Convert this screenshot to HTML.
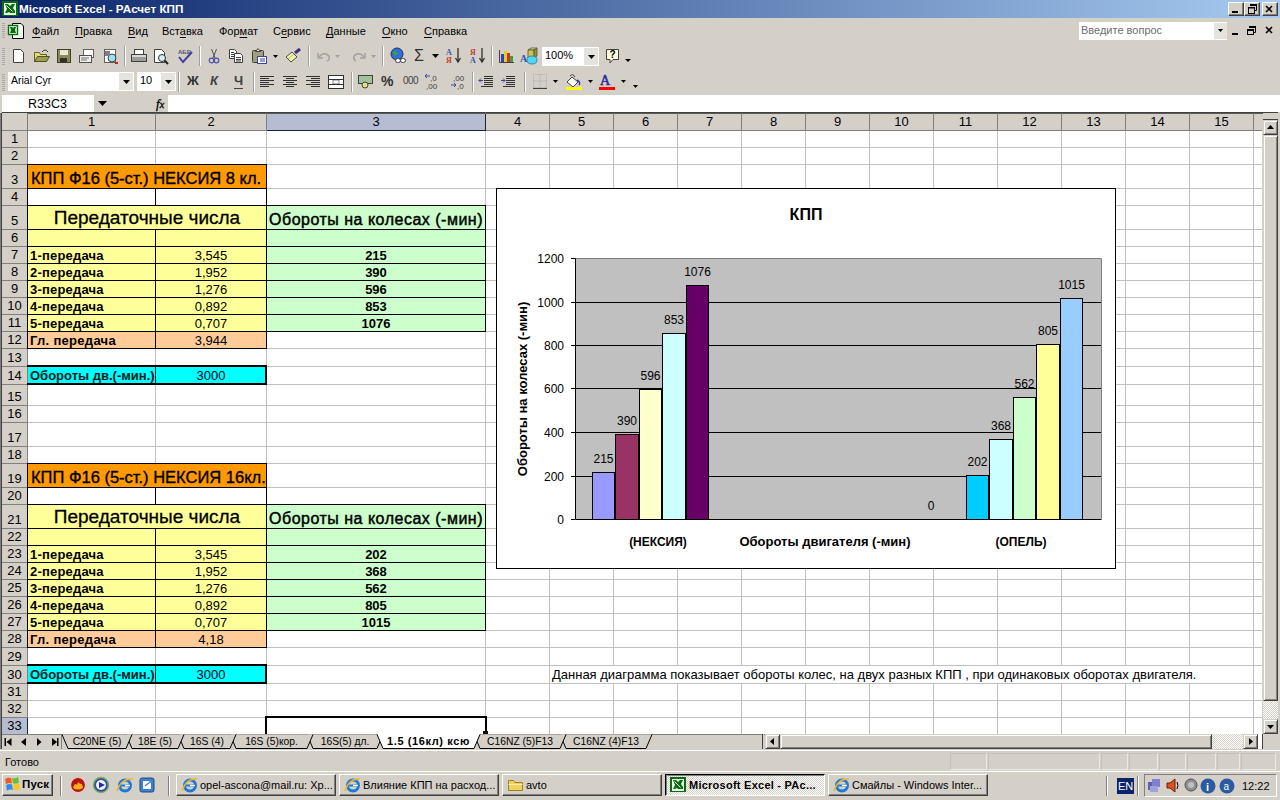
<!DOCTYPE html><html><head><meta charset="utf-8"><title>Excel</title><style>
*{margin:0;padding:0;box-sizing:border-box}
body{width:1280px;height:800px;overflow:hidden;position:relative;background:#D4D0C8;font-family:"Liberation Sans",sans-serif;font-size:11px;color:#000}
.a{position:absolute}
.t{position:absolute;white-space:nowrap;line-height:1}
.ctr{text-align:center}
svg{position:absolute;overflow:visible}
</style></head><body>
<div class="a" style="left:0px;top:0px;width:1280px;height:18px;background:linear-gradient(to right,#0A246A,#A6CAF0)"></div>
<svg style="left:2px;top:1px" width="16" height="16"><rect x="0" y="0" width="16" height="15" fill="#0B6A12"/><rect x="2" y="2" width="12" height="12" fill="#E8FFE8"/><path d="M3 3 H6 L8 5 L10 3 H13 L11 7 L13 10 V12 H8 L7 11 L5 12 H3 L5 8Z" fill="#0B6A12"/><path d="M4.5 4.5 L10.5 10.5" stroke="#E8FFE8" stroke-width="1"/></svg>
<div class="t" style="left:19px;top:3px;font-size:11.7px;font-weight:bold;color:#fff">Microsoft Excel - PAсчет КПП</div>
<div class="a" style="left:1228px;top:2px;width:16px;height:14px;background:#D4D0C8;border-top:1px solid #fff;border-left:1px solid #fff;border-right:1px solid #404040;border-bottom:1px solid #404040;box-shadow:inset -1px -1px 0 #808080"></div>
<div class="a" style="left:1244px;top:2px;width:16px;height:14px;background:#D4D0C8;border-top:1px solid #fff;border-left:1px solid #fff;border-right:1px solid #404040;border-bottom:1px solid #404040;box-shadow:inset -1px -1px 0 #808080"></div>
<div class="a" style="left:1262px;top:2px;width:16px;height:14px;background:#D4D0C8;border-top:1px solid #fff;border-left:1px solid #fff;border-right:1px solid #404040;border-bottom:1px solid #404040;box-shadow:inset -1px -1px 0 #808080"></div>
<svg style="left:1228px;top:2px" width="50" height="14"><rect x="4" y="9" width="6" height="2" fill="#000"/><rect x="20.5" y="5.5" width="6" height="6" fill="none" stroke="#000"/><rect x="20" y="5" width="7" height="1.5" fill="#000"/><path d="M22.5 3.5 H28.5 V8.5 H27" fill="none" stroke="#000"/><rect x="22" y="2" width="7" height="2" fill="#000"/><path d="M38 4 L44 10 M44 4 L38 10" stroke="#000" stroke-width="1.6"/></svg>
<div class="a" style="left:0px;top:18px;width:1280px;height:1px;background:#D4D0C8"></div>
<div class="a" style="left:2px;top:23px;width:3px;height:1px;background:#A8A8A8"></div>
<div class="a" style="left:2px;top:25px;width:3px;height:1px;background:#A8A8A8"></div>
<div class="a" style="left:2px;top:27px;width:3px;height:1px;background:#A8A8A8"></div>
<div class="a" style="left:2px;top:29px;width:3px;height:1px;background:#A8A8A8"></div>
<div class="a" style="left:2px;top:31px;width:3px;height:1px;background:#A8A8A8"></div>
<div class="a" style="left:2px;top:33px;width:3px;height:1px;background:#A8A8A8"></div>
<div class="a" style="left:2px;top:35px;width:3px;height:1px;background:#A8A8A8"></div>
<div class="a" style="left:2px;top:37px;width:3px;height:1px;background:#A8A8A8"></div>
<svg style="left:6px;top:22px" width="20" height="18"><path d="M6.5 1.5 H15 L17.5 4 V16.5 H6.5Z" fill="#F0FFF0" stroke="#000"/><rect x="2.5" y="3.5" width="9" height="9" fill="#E0FFE0" stroke="#0B6A12" stroke-width="1.4"/><path d="M4 5 H6 L7 6 L8 5 H10 L9 8 L10 11 H4 L5 8Z" fill="#0B6A12"/></svg>
<div class="t" style="left:32px;top:26px;font-size:11px;text-decoration-thickness:1px;text-underline-offset:1.5px"><u>Ф</u>айл</div>
<div class="t" style="left:75px;top:26px;font-size:11px;text-decoration-thickness:1px;text-underline-offset:1.5px"><u>П</u>равка</div>
<div class="t" style="left:128px;top:26px;font-size:11px;text-decoration-thickness:1px;text-underline-offset:1.5px"><u>В</u>ид</div>
<div class="t" style="left:162px;top:26px;font-size:11px;text-decoration-thickness:1px;text-underline-offset:1.5px">Вст<u>а</u>вка</div>
<div class="t" style="left:219px;top:26px;font-size:11px;text-decoration-thickness:1px;text-underline-offset:1.5px">Фор<u>м</u>ат</div>
<div class="t" style="left:273px;top:26px;font-size:11px;text-decoration-thickness:1px;text-underline-offset:1.5px">С<u>е</u>рвис</div>
<div class="t" style="left:326px;top:26px;font-size:11px;text-decoration-thickness:1px;text-underline-offset:1.5px"><u>Д</u>анные</div>
<div class="t" style="left:382px;top:26px;font-size:11px;text-decoration-thickness:1px;text-underline-offset:1.5px"><u>О</u>кно</div>
<div class="t" style="left:424px;top:26px;font-size:11px;text-decoration-thickness:1px;text-underline-offset:1.5px"><u>С</u>правка</div>
<div class="a" style="left:1079px;top:22px;width:148px;height:18px;background:#fff"></div>
<div class="a" style="left:1214px;top:23px;width:13px;height:16px;background:#D4D0C8;opacity:0.6"></div>
<svg style="left:1218px;top:29px" width="5" height="3"><path d="M0 0 H5 L2.5 3Z" fill="#000"/></svg>
<div class="t" style="left:1081px;top:25px;font-size:11px;color:#6D6D6D">Введите вопрос</div>
<svg style="left:1228px;top:22px" width="50" height="18"><rect x="4" y="11" width="6" height="2" fill="#000"/><rect x="19.5" y="7.5" width="6" height="5" fill="none" stroke="#000"/><rect x="19" y="7" width="7" height="2" fill="#000"/><path d="M21.5 5.5 H27.5 V10.5 H26" fill="none" stroke="#000"/><rect x="21" y="4" width="7" height="2" fill="#000"/><path d="M38 5 L44 11 M44 5 L38 11" stroke="#000" stroke-width="1.6"/></svg>
<div class="a" style="left:0px;top:43px;width:636px;height:25px;background:#D4D0C8"></div>
<div class="a" style="left:2px;top:48px;width:3px;height:1px;background:#A8A8A8"></div>
<div class="a" style="left:2px;top:50px;width:3px;height:1px;background:#A8A8A8"></div>
<div class="a" style="left:2px;top:52px;width:3px;height:1px;background:#A8A8A8"></div>
<div class="a" style="left:2px;top:54px;width:3px;height:1px;background:#A8A8A8"></div>
<div class="a" style="left:2px;top:56px;width:3px;height:1px;background:#A8A8A8"></div>
<div class="a" style="left:2px;top:58px;width:3px;height:1px;background:#A8A8A8"></div>
<div class="a" style="left:2px;top:60px;width:3px;height:1px;background:#A8A8A8"></div>
<div class="a" style="left:2px;top:62px;width:3px;height:1px;background:#A8A8A8"></div>
<div class="a" style="left:2px;top:64px;width:3px;height:1px;background:#A8A8A8"></div>
<div class="a" style="left:2px;top:74px;width:3px;height:1px;background:#A8A8A8"></div>
<div class="a" style="left:2px;top:76px;width:3px;height:1px;background:#A8A8A8"></div>
<div class="a" style="left:2px;top:78px;width:3px;height:1px;background:#A8A8A8"></div>
<div class="a" style="left:2px;top:80px;width:3px;height:1px;background:#A8A8A8"></div>
<div class="a" style="left:2px;top:82px;width:3px;height:1px;background:#A8A8A8"></div>
<div class="a" style="left:2px;top:84px;width:3px;height:1px;background:#A8A8A8"></div>
<div class="a" style="left:2px;top:86px;width:3px;height:1px;background:#A8A8A8"></div>
<div class="a" style="left:2px;top:88px;width:3px;height:1px;background:#A8A8A8"></div>
<div class="a" style="left:2px;top:90px;width:3px;height:1px;background:#A8A8A8"></div>
<div class="a" style="left:124px;top:46px;width:1px;height:20px;background:#A0A0A0"></div>
<div class="a" style="left:125px;top:46px;width:1px;height:20px;background:#fff"></div>
<div class="a" style="left:199px;top:46px;width:1px;height:20px;background:#A0A0A0"></div>
<div class="a" style="left:200px;top:46px;width:1px;height:20px;background:#fff"></div>
<div class="a" style="left:308px;top:46px;width:1px;height:20px;background:#A0A0A0"></div>
<div class="a" style="left:309px;top:46px;width:1px;height:20px;background:#fff"></div>
<div class="a" style="left:382px;top:46px;width:1px;height:20px;background:#A0A0A0"></div>
<div class="a" style="left:383px;top:46px;width:1px;height:20px;background:#fff"></div>
<div class="a" style="left:491px;top:46px;width:1px;height:20px;background:#A0A0A0"></div>
<div class="a" style="left:492px;top:46px;width:1px;height:20px;background:#fff"></div>
<div class="a" style="left:178px;top:72px;width:1px;height:20px;background:#A0A0A0"></div>
<div class="a" style="left:179px;top:72px;width:1px;height:20px;background:#fff"></div>
<div class="a" style="left:253px;top:72px;width:1px;height:20px;background:#A0A0A0"></div>
<div class="a" style="left:254px;top:72px;width:1px;height:20px;background:#fff"></div>
<div class="a" style="left:351px;top:72px;width:1px;height:20px;background:#A0A0A0"></div>
<div class="a" style="left:352px;top:72px;width:1px;height:20px;background:#fff"></div>
<div class="a" style="left:472px;top:72px;width:1px;height:20px;background:#A0A0A0"></div>
<div class="a" style="left:473px;top:72px;width:1px;height:20px;background:#fff"></div>
<div class="a" style="left:524px;top:72px;width:1px;height:20px;background:#A0A0A0"></div>
<div class="a" style="left:525px;top:72px;width:1px;height:20px;background:#fff"></div>
<svg style="left:11px;top:48px" width="16" height="16"><path d="M2.5 1.5 H9.5 L12.5 4.5 V14.5 H2.5 Z" fill="#fff" stroke="#404040"/></svg>
<svg style="left:33px;top:48px" width="18" height="16"><path d="M1.5 4.5 H6.5 L7.5 6.5 H13.5 V13.5 H1.5Z" fill="#E8D878" stroke="#606030"/><path d="M1.5 13.5 L4.5 8.5 H16.5 L13.5 13.5Z" fill="#9CA050" stroke="#505020"/><path d="M9 4 Q12 0 15 4" fill="none" stroke="#303030"/></svg>
<svg style="left:56px;top:48px" width="16" height="16"><rect x="1.5" y="1.5" width="13" height="13" fill="#8A8A5A" stroke="#404020"/><rect x="4" y="2" width="8" height="5" fill="#E8E8D8"/><rect x="4" y="10" width="7" height="4" fill="#303030"/></svg>
<svg style="left:78px;top:48px" width="18" height="16"><rect x="5.5" y="1.5" width="10" height="8" fill="#fff" stroke="#606060"/><rect x="1.5" y="7.5" width="12" height="7" fill="#F0F0F0" stroke="#505050"/><path d="M3 10H11M3 12H9" stroke="#707070"/></svg>
<svg style="left:102px;top:48px" width="18" height="17"><rect x="2.5" y="1.5" width="11" height="13" fill="#fff" stroke="#606060"/><circle cx="10" cy="10" r="4" fill="#9FE0F0" stroke="#404040"/><rect x="13" y="14" width="3" height="2" fill="#D02020"/><rect x="3" y="3" width="5" height="5" fill="#808080"/></svg>
<svg style="left:130px;top:48px" width="18" height="16"><rect x="4.5" y="1.5" width="9" height="6" fill="#fff" stroke="#404040"/><rect x="1.5" y="6.5" width="15" height="7" fill="#D8D8D8" stroke="#404040"/><path d="M2 10H16M2 12H16" stroke="#606060"/></svg>
<svg style="left:153px;top:48px" width="18" height="17"><path d="M1.5 1.5 H8.5 L11.5 4.5 V14.5 H1.5Z" fill="#fff" stroke="#404040"/><circle cx="9" cy="10" r="3.5" fill="#D0F0F8" stroke="#303030"/><path d="M11.5 12.5 L15 16" stroke="#202020" stroke-width="2"/></svg>
<svg style="left:176px;top:48px" width="18" height="16"><text x="2" y="6" font-size="6" font-family="Liberation Sans" font-weight="bold" fill="#505070">АБВ</text><path d="M3 9 L7 14 L16 4" fill="none" stroke="#4040A0" stroke-width="2"/></svg>
<svg style="left:207px;top:48px" width="14" height="16"><path d="M4.5 1 L8 10 M9.5 1 L6 10" stroke="#505050" stroke-width="1"/><circle cx="4.5" cy="12.5" r="2.3" fill="none" stroke="#5050B0" stroke-width="1.2"/><circle cx="9.5" cy="12.5" r="2.3" fill="none" stroke="#5050B0" stroke-width="1.2"/></svg>
<svg style="left:228px;top:48px" width="17" height="16"><path d="M1.5 1.5 H6.5 L8.5 3.5 V10.5 H1.5Z" fill="#fff" stroke="#404040"/><path d="M3 4.5H6M3 6.5H7M3 8.5H7" stroke="#404040"/><path d="M6.5 5.5 H12.5 L14.5 7.5 V14.5 H6.5Z" fill="#fff" stroke="#404040"/><path d="M8 9.5H13M8 11.5H13M8 13H13" stroke="#404040"/></svg>
<svg style="left:251px;top:48px" width="28" height="17"><rect x="1.5" y="2.5" width="11" height="12" rx="1" fill="#A0A080" stroke="#404030"/><path d="M4.5 3.5 L7 0.5 L9.5 3.5Z" fill="#E0E0E0" stroke="#404040"/><rect x="6.5" y="8.5" width="9" height="7" fill="#fff" stroke="#4040A0"/><path d="M9 11H14M9 13H14" stroke="#4040A0"/><path d="M22 7 H27 L24.5 10Z" fill="#000"/></svg>
<svg style="left:285px;top:47px" width="18" height="17"><path d="M1 10 L7 5 L12 10 L6 15Z" fill="#F0F0B0" stroke="#505040"/><path d="M3 12 L9 7" stroke="#C0C080"/><path d="M10 6 L15 2" stroke="#403080" stroke-width="3"/></svg>
<svg style="left:315px;top:49px" width="70" height="14"><path d="M3 4 L3 9 L8 9" fill="none" stroke="#A0A0A0" stroke-width="1.5"/><path d="M4 8 Q9 2 14 7 Q15 11 12 12" fill="none" stroke="#A0A0A0" stroke-width="1.5"/><path d="M20 6 H25 L22.5 9Z" fill="#A0A0A0"/><path d="M50 4 L50 9 L45 9" fill="none" stroke="#A0A0A0" stroke-width="1.5"/><path d="M49 8 Q44 2 39 7 Q38 11 41 12" fill="none" stroke="#A0A0A0" stroke-width="1.5"/><path d="M56 6 H61 L58.5 9Z" fill="#A0A0A0"/></svg>
<svg style="left:389px;top:47px" width="18" height="18"><circle cx="8" cy="7" r="6" fill="#3070D0" stroke="#203060"/><path d="M4 5 Q7 3 9 6 Q7 9 5 8Z" fill="#40A040"/><rect x="6.5" y="11.5" width="5" height="4" rx="2" fill="#fff" stroke="#404040"/><rect x="11.5" y="11.5" width="5" height="4" rx="2" fill="#fff" stroke="#404040"/></svg>
<div class="t" style="left:414px;top:48px;font-size:16px;color:#303030">Σ</div>
<svg style="left:432px;top:54px" width="7" height="4"><path d="M0 0 H7 L3.5 4Z" fill="#000"/></svg>
<svg style="left:445px;top:47px" width="18" height="18"><text x="1" y="8" font-size="8" font-weight="bold" font-family="Liberation Serif" fill="#4050B0">А</text><text x="1" y="16" font-size="8" font-weight="bold" font-family="Liberation Serif" fill="#C04030">Я</text><path d="M13 1 V14 M10.5 11 L13 15 L15.5 11" fill="none" stroke="#303030" stroke-width="1.3"/></svg>
<svg style="left:469px;top:47px" width="18" height="18"><text x="1" y="8" font-size="8" font-weight="bold" font-family="Liberation Serif" fill="#C04030">Я</text><text x="1" y="16" font-size="8" font-weight="bold" font-family="Liberation Serif" fill="#4050B0">А</text><path d="M13 1 V14 M10.5 11 L13 15 L15.5 11" fill="none" stroke="#303030" stroke-width="1.3"/></svg>
<svg style="left:498px;top:47px" width="18" height="18"><path d="M1.5 3 V15.5 H16" fill="none" stroke="#404040"/><rect x="3" y="7" width="3" height="8" fill="#3040C0"/><rect x="6" y="4" width="3" height="11" fill="#E0D020"/><rect x="9" y="6" width="3" height="9" fill="#D03030"/><rect x="12" y="9" width="3" height="6" fill="#40A040"/></svg>
<svg style="left:520px;top:47px" width="20" height="19"><path d="M8 3 L11 1 H17 L14 3Z" fill="#E8E890" stroke="#505030" stroke-width="0.8"/><path d="M8 3 H14 V11 H8Z" fill="#C8C850" stroke="#505030" stroke-width="0.8"/><path d="M14 3 L17 1 V9 L14 11Z" fill="#909040" stroke="#505030" stroke-width="0.8"/><path d="M7 13 Q7 9 12 9 Q17 9 17 13 Q17 17 12 17 Q7 17 7 13Z" fill="#50D8F0" stroke="#3070A0" stroke-width="0.8"/><text x="0" y="15" font-size="10" font-weight="bold" font-family="Liberation Serif" fill="#3050B0">A</text></svg>
<div class="a" style="left:542px;top:47px;width:57px;height:19px;background:#fff"></div>
<div class="a" style="left:584px;top:48px;width:14px;height:17px;background:#D4D0C8;opacity:0.6"></div>
<div class="t" style="left:545px;top:50px;font-size:11px">100%</div>
<svg style="left:588px;top:55px" width="7" height="4"><path d="M0 0 H7 L3.5 4Z" fill="#000"/></svg>
<svg style="left:604px;top:47px" width="18" height="18"><path d="M2.5 2.5 H14.5 V12.5 H9 L6 16 V12.5 H2.5Z" fill="#FFFFE0" stroke="#404040"/><text x="5.5" y="11" font-size="10" font-weight="bold" fill="#000">?</text></svg>
<svg style="left:625px;top:59px" width="6" height="3"><path d="M0 0 H6 L3 3Z" fill="#000"/></svg>
<div class="a" style="left:8px;top:72px;width:126px;height:19px;background:#fff"></div>
<div class="a" style="left:119px;top:73px;width:14px;height:17px;background:#D4D0C8;opacity:0.6"></div>
<div class="t" style="left:11px;top:75px;font-size:10.5px">Arial Cyr</div>
<svg style="left:123px;top:80px" width="7" height="4"><path d="M0 0 H7 L3.5 4Z" fill="#000"/></svg>
<div class="a" style="left:137px;top:72px;width:39px;height:19px;background:#fff"></div>
<div class="a" style="left:161px;top:73px;width:14px;height:17px;background:#D4D0C8;opacity:0.6"></div>
<div class="t" style="left:140px;top:75px;font-size:11px">10</div>
<svg style="left:165px;top:80px" width="7" height="4"><path d="M0 0 H7 L3.5 4Z" fill="#000"/></svg>
<div class="t" style="left:187px;top:74px;font-size:13px;font-weight:bold;color:#303030">Ж</div>
<div class="t" style="left:210px;top:74px;font-size:13px;font-weight:bold;font-style:italic;color:#404040">К</div>
<div class="t" style="left:234px;top:74px;font-size:13px;font-weight:bold;color:#404040">Ч</div>
<div class="a" style="left:234px;top:88px;width:9px;height:1px;background:#404040"></div>
<svg style="left:259px;top:74px" width="80" height="16"><path d="M1 2.5H15M1 4.5H10M1 6.5H15M1 8.5H10M1 10.5H15M1 12.5H10" stroke="#303030"/><path d="M24 2.5H38M27 4.5H35M24 6.5H38M27 8.5H35M24 10.5H38M27 12.5H35" stroke="#303030"/><path d="M47 2.5H61M52 4.5H61M47 6.5H61M52 8.5H61M47 10.5H61M52 12.5H61" stroke="#303030"/><rect x="69.5" y="1.5" width="15" height="13" fill="#fff" stroke="#303030"/><path d="M70 5.5H84M70 10.5H84" stroke="#303030"/><rect x="74" y="6" width="6" height="4" fill="#fff" stroke="#303030" stroke-width="0.6"/></svg>
<svg style="left:357px;top:73px" width="20" height="17"><rect x="1.5" y="2.5" width="14" height="8" fill="#A0C0A0" stroke="#404040"/><circle cx="8" cy="12" r="3" fill="#E0E080" stroke="#404040"/></svg>
<div class="t" style="left:381px;top:74px;font-size:14px;font-weight:bold;color:#303030">%</div>
<div class="t" style="left:403px;top:76px;font-size:10px;color:#404040;letter-spacing:-0.5px">000</div>
<svg style="left:425px;top:72px" width="50" height="20"><text x="5" y="9" font-size="8" fill="#404040">,0</text><text x="1" y="17" font-size="8" fill="#404040">,00</text><path d="M1 4 H5 M2 2 L0 4 L2 6" stroke="#4040A0" fill="none"/><text x="28" y="9" font-size="8" fill="#404040">,00</text><text x="32" y="17" font-size="8" fill="#404040">,0</text><path d="M26 13 H31 M29 11 L31 13 L29 15" stroke="#4040A0" fill="none"/></svg>
<svg style="left:478px;top:74px" width="40" height="16"><path d="M6 2.5H15M6 4.5H15M6 6.5H15M6 8.5H15M6 10.5H15M3 12.5H15" stroke="#303030"/><path d="M1 6.5 H5 M3 4.5 L1 6.5 L3 8.5" stroke="#4040A0" fill="none"/><path d="M28 2.5H37M28 4.5H37M28 6.5H37M28 8.5H37M28 10.5H37M25 12.5H37" stroke="#303030"/><path d="M23 6.5 H27 M25 4.5 L27 6.5 L25 8.5" stroke="#4040A0" fill="none"/></svg>
<svg style="left:532px;top:73px" width="110" height="18"><path d="M1.5 1.5 H14.5 V14.5 H1.5Z M8 1.5 V14.5 M1.5 8 H14.5" fill="none" stroke="#A8A8A8" stroke-dasharray="1 1"/><path d="M1 15.5 H15" stroke="#404040"/><path d="M21 7 H26 L23.5 10Z" fill="#000"/><path d="M35 9 L40 4 L46 9 L41 14Z" fill="#fff" stroke="#404040"/><path d="M38 3 Q41 0 43 4" fill="none" stroke="#404040"/><path d="M45 7 Q49 9 47 12" fill="none" stroke="#4040A0" stroke-width="1.5"/><rect x="34" y="14" width="16" height="3" fill="#FFFF00"/><path d="M56 7 H61 L58.5 10Z" fill="#000"/><text x="68" y="12" font-size="14" font-family="Liberation Serif" fill="#2828A0" stroke="#2828A0" stroke-width="0.5">A</text><rect x="67" y="14" width="16" height="3" fill="#FF0000"/><path d="M89 7 H94 L91.5 10Z" fill="#000"/><path d="M101 12 H106 L103.5 15Z" fill="#000"/></svg>
<div class="a" style="left:2px;top:95px;width:92px;height:17px;background:#fff"></div>
<div class="t" style="left:28px;top:98px;font-size:12.5px">R33C3</div>
<svg style="left:98px;top:101px" width="9" height="5"><path d="M0 0 H9 L4.5 5Z" fill="#000"/></svg>
<div class="t" style="left:156px;top:97px;font-size:13px;font-family:&quot;Liberation Serif&quot;,serif;-webkit-text-stroke:0.3px #000"><i>f</i><span style="font-size:10px"><i>x</i></span></div>
<div class="a" style="left:168px;top:95px;width:1112px;height:17px;background:#fff"></div>
<div class="a" style="left:2px;top:112px;width:1276px;height:1px;background:#404040"></div>
<div class="a" style="left:2px;top:113px;width:1260px;height:18px;background:#D4D0C8"></div>
<div class="a" style="left:2px;top:113px;width:1276px;height:1px;background:#5A5A5A"></div>
<div class="a" style="left:2px;top:113px;width:26px;height:621px;background:#D4D0C8"></div>
<div class="a" style="left:28px;top:131px;width:1234px;height:603px;background:#fff"></div>
<div class="a" style="left:267px;top:114px;width:218px;height:16px;background:#B6BDD2"></div>
<div class="a" style="left:267px;top:130px;width:219px;height:1px;background:#1A2440"></div>
<div class="a" style="left:485px;top:114px;width:1px;height:17px;background:#1A2440"></div>
<div class="a" style="left:2px;top:718px;width:25px;height:16px;background:#B6BDD2"></div>
<div class="a" style="left:27px;top:718px;width:1px;height:16px;background:#1A2440"></div>
<div class="a" style="left:0px;top:113px;width:2px;height:637px;background:#808080"></div>
<div class="a" style="left:1px;top:113px;width:1px;height:637px;background:#404040"></div>
<div class="a" style="left:27px;top:113px;width:1px;height:621px;background:#808080"></div>
<div class="a" style="left:155px;top:113px;width:1px;height:18px;background:#808080"></div>
<div class="a" style="left:155px;top:131px;width:1px;height:603px;background:#C0C0C0"></div>
<div class="a" style="left:266px;top:113px;width:1px;height:18px;background:#808080"></div>
<div class="a" style="left:266px;top:131px;width:1px;height:603px;background:#C0C0C0"></div>
<div class="a" style="left:485px;top:113px;width:1px;height:18px;background:#808080"></div>
<div class="a" style="left:485px;top:131px;width:1px;height:603px;background:#C0C0C0"></div>
<div class="a" style="left:549px;top:113px;width:1px;height:18px;background:#808080"></div>
<div class="a" style="left:549px;top:131px;width:1px;height:603px;background:#C0C0C0"></div>
<div class="a" style="left:613px;top:113px;width:1px;height:18px;background:#808080"></div>
<div class="a" style="left:613px;top:131px;width:1px;height:603px;background:#C0C0C0"></div>
<div class="a" style="left:677px;top:113px;width:1px;height:18px;background:#808080"></div>
<div class="a" style="left:677px;top:131px;width:1px;height:603px;background:#C0C0C0"></div>
<div class="a" style="left:741px;top:113px;width:1px;height:18px;background:#808080"></div>
<div class="a" style="left:741px;top:131px;width:1px;height:603px;background:#C0C0C0"></div>
<div class="a" style="left:805px;top:113px;width:1px;height:18px;background:#808080"></div>
<div class="a" style="left:805px;top:131px;width:1px;height:603px;background:#C0C0C0"></div>
<div class="a" style="left:869px;top:113px;width:1px;height:18px;background:#808080"></div>
<div class="a" style="left:869px;top:131px;width:1px;height:603px;background:#C0C0C0"></div>
<div class="a" style="left:933px;top:113px;width:1px;height:18px;background:#808080"></div>
<div class="a" style="left:933px;top:131px;width:1px;height:603px;background:#C0C0C0"></div>
<div class="a" style="left:997px;top:113px;width:1px;height:18px;background:#808080"></div>
<div class="a" style="left:997px;top:131px;width:1px;height:603px;background:#C0C0C0"></div>
<div class="a" style="left:1061px;top:113px;width:1px;height:18px;background:#808080"></div>
<div class="a" style="left:1061px;top:131px;width:1px;height:603px;background:#C0C0C0"></div>
<div class="a" style="left:1125px;top:113px;width:1px;height:18px;background:#808080"></div>
<div class="a" style="left:1125px;top:131px;width:1px;height:603px;background:#C0C0C0"></div>
<div class="a" style="left:1189px;top:113px;width:1px;height:18px;background:#808080"></div>
<div class="a" style="left:1189px;top:131px;width:1px;height:603px;background:#C0C0C0"></div>
<div class="a" style="left:1253px;top:113px;width:1px;height:18px;background:#808080"></div>
<div class="a" style="left:1253px;top:131px;width:1px;height:603px;background:#C0C0C0"></div>
<div class="a" style="left:2px;top:130px;width:1260px;height:1px;background:#808080"></div>
<div class="a" style="left:2px;top:147px;width:25px;height:1px;background:#808080"></div>
<div class="a" style="left:28px;top:147px;width:1234px;height:1px;background:#C0C0C0"></div>
<div class="a" style="left:2px;top:164px;width:25px;height:1px;background:#808080"></div>
<div class="a" style="left:28px;top:164px;width:1234px;height:1px;background:#C0C0C0"></div>
<div class="a" style="left:2px;top:188px;width:25px;height:1px;background:#808080"></div>
<div class="a" style="left:28px;top:188px;width:1234px;height:1px;background:#C0C0C0"></div>
<div class="a" style="left:2px;top:205px;width:25px;height:1px;background:#808080"></div>
<div class="a" style="left:28px;top:205px;width:1234px;height:1px;background:#C0C0C0"></div>
<div class="a" style="left:2px;top:229px;width:25px;height:1px;background:#808080"></div>
<div class="a" style="left:28px;top:229px;width:1234px;height:1px;background:#C0C0C0"></div>
<div class="a" style="left:2px;top:246px;width:25px;height:1px;background:#808080"></div>
<div class="a" style="left:28px;top:246px;width:1234px;height:1px;background:#C0C0C0"></div>
<div class="a" style="left:2px;top:263px;width:25px;height:1px;background:#808080"></div>
<div class="a" style="left:28px;top:263px;width:1234px;height:1px;background:#C0C0C0"></div>
<div class="a" style="left:2px;top:280px;width:25px;height:1px;background:#808080"></div>
<div class="a" style="left:28px;top:280px;width:1234px;height:1px;background:#C0C0C0"></div>
<div class="a" style="left:2px;top:297px;width:25px;height:1px;background:#808080"></div>
<div class="a" style="left:28px;top:297px;width:1234px;height:1px;background:#C0C0C0"></div>
<div class="a" style="left:2px;top:314px;width:25px;height:1px;background:#808080"></div>
<div class="a" style="left:28px;top:314px;width:1234px;height:1px;background:#C0C0C0"></div>
<div class="a" style="left:2px;top:331px;width:25px;height:1px;background:#808080"></div>
<div class="a" style="left:28px;top:331px;width:1234px;height:1px;background:#C0C0C0"></div>
<div class="a" style="left:2px;top:348px;width:25px;height:1px;background:#808080"></div>
<div class="a" style="left:28px;top:348px;width:1234px;height:1px;background:#C0C0C0"></div>
<div class="a" style="left:2px;top:366px;width:25px;height:1px;background:#808080"></div>
<div class="a" style="left:28px;top:366px;width:1234px;height:1px;background:#C0C0C0"></div>
<div class="a" style="left:2px;top:384px;width:25px;height:1px;background:#808080"></div>
<div class="a" style="left:28px;top:384px;width:1234px;height:1px;background:#C0C0C0"></div>
<div class="a" style="left:2px;top:405px;width:25px;height:1px;background:#808080"></div>
<div class="a" style="left:28px;top:405px;width:1234px;height:1px;background:#C0C0C0"></div>
<div class="a" style="left:2px;top:422px;width:25px;height:1px;background:#808080"></div>
<div class="a" style="left:28px;top:422px;width:1234px;height:1px;background:#C0C0C0"></div>
<div class="a" style="left:2px;top:446px;width:25px;height:1px;background:#808080"></div>
<div class="a" style="left:28px;top:446px;width:1234px;height:1px;background:#C0C0C0"></div>
<div class="a" style="left:2px;top:463px;width:25px;height:1px;background:#808080"></div>
<div class="a" style="left:28px;top:463px;width:1234px;height:1px;background:#C0C0C0"></div>
<div class="a" style="left:2px;top:487px;width:25px;height:1px;background:#808080"></div>
<div class="a" style="left:28px;top:487px;width:1234px;height:1px;background:#C0C0C0"></div>
<div class="a" style="left:2px;top:504px;width:25px;height:1px;background:#808080"></div>
<div class="a" style="left:28px;top:504px;width:1234px;height:1px;background:#C0C0C0"></div>
<div class="a" style="left:2px;top:528px;width:25px;height:1px;background:#808080"></div>
<div class="a" style="left:28px;top:528px;width:1234px;height:1px;background:#C0C0C0"></div>
<div class="a" style="left:2px;top:545px;width:25px;height:1px;background:#808080"></div>
<div class="a" style="left:28px;top:545px;width:1234px;height:1px;background:#C0C0C0"></div>
<div class="a" style="left:2px;top:562px;width:25px;height:1px;background:#808080"></div>
<div class="a" style="left:28px;top:562px;width:1234px;height:1px;background:#C0C0C0"></div>
<div class="a" style="left:2px;top:579px;width:25px;height:1px;background:#808080"></div>
<div class="a" style="left:28px;top:579px;width:1234px;height:1px;background:#C0C0C0"></div>
<div class="a" style="left:2px;top:596px;width:25px;height:1px;background:#808080"></div>
<div class="a" style="left:28px;top:596px;width:1234px;height:1px;background:#C0C0C0"></div>
<div class="a" style="left:2px;top:613px;width:25px;height:1px;background:#808080"></div>
<div class="a" style="left:28px;top:613px;width:1234px;height:1px;background:#C0C0C0"></div>
<div class="a" style="left:2px;top:630px;width:25px;height:1px;background:#808080"></div>
<div class="a" style="left:28px;top:630px;width:1234px;height:1px;background:#C0C0C0"></div>
<div class="a" style="left:2px;top:647px;width:25px;height:1px;background:#808080"></div>
<div class="a" style="left:28px;top:647px;width:1234px;height:1px;background:#C0C0C0"></div>
<div class="a" style="left:2px;top:665px;width:25px;height:1px;background:#808080"></div>
<div class="a" style="left:28px;top:665px;width:1234px;height:1px;background:#C0C0C0"></div>
<div class="a" style="left:2px;top:683px;width:25px;height:1px;background:#808080"></div>
<div class="a" style="left:28px;top:683px;width:1234px;height:1px;background:#C0C0C0"></div>
<div class="a" style="left:2px;top:700px;width:25px;height:1px;background:#808080"></div>
<div class="a" style="left:28px;top:700px;width:1234px;height:1px;background:#C0C0C0"></div>
<div class="a" style="left:2px;top:717px;width:25px;height:1px;background:#808080"></div>
<div class="a" style="left:28px;top:717px;width:1234px;height:1px;background:#C0C0C0"></div>
<div class="a" style="left:2px;top:734px;width:25px;height:1px;background:#808080"></div>
<div class="a" style="left:28px;top:734px;width:1234px;height:1px;background:#C0C0C0"></div>
<div class="a" style="left:267px;top:130px;width:219px;height:1px;background:#1A2440"></div>
<div class="a" style="left:485px;top:114px;width:1px;height:17px;background:#1A2440"></div>
<div class="a" style="left:27px;top:718px;width:1px;height:16px;background:#1A2440"></div>
<div class="t" style="left:61.5px;top:115px;width:60px;text-align:center;font-size:13px">1</div>
<div class="t" style="left:181.0px;top:115px;width:60px;text-align:center;font-size:13px">2</div>
<div class="t" style="left:346.0px;top:115px;width:60px;text-align:center;font-size:13px">3</div>
<div class="t" style="left:487.5px;top:115px;width:60px;text-align:center;font-size:13px">4</div>
<div class="t" style="left:551.5px;top:115px;width:60px;text-align:center;font-size:13px">5</div>
<div class="t" style="left:615.5px;top:115px;width:60px;text-align:center;font-size:13px">6</div>
<div class="t" style="left:679.5px;top:115px;width:60px;text-align:center;font-size:13px">7</div>
<div class="t" style="left:743.5px;top:115px;width:60px;text-align:center;font-size:13px">8</div>
<div class="t" style="left:807.5px;top:115px;width:60px;text-align:center;font-size:13px">9</div>
<div class="t" style="left:871.5px;top:115px;width:60px;text-align:center;font-size:13px">10</div>
<div class="t" style="left:935.5px;top:115px;width:60px;text-align:center;font-size:13px">11</div>
<div class="t" style="left:999.5px;top:115px;width:60px;text-align:center;font-size:13px">12</div>
<div class="t" style="left:1063.5px;top:115px;width:60px;text-align:center;font-size:13px">13</div>
<div class="t" style="left:1127.5px;top:115px;width:60px;text-align:center;font-size:13px">14</div>
<div class="t" style="left:1191.5px;top:115px;width:60px;text-align:center;font-size:13px">15</div>
<div class="t" style="left:2px;top:132px;width:25px;text-align:center;font-size:13px">1</div>
<div class="t" style="left:2px;top:149px;width:25px;text-align:center;font-size:13px">2</div>
<div class="t" style="left:2px;top:173px;width:25px;text-align:center;font-size:13px">3</div>
<div class="t" style="left:2px;top:190px;width:25px;text-align:center;font-size:13px">4</div>
<div class="t" style="left:2px;top:214px;width:25px;text-align:center;font-size:13px">5</div>
<div class="t" style="left:2px;top:231px;width:25px;text-align:center;font-size:13px">6</div>
<div class="t" style="left:2px;top:248px;width:25px;text-align:center;font-size:13px">7</div>
<div class="t" style="left:2px;top:265px;width:25px;text-align:center;font-size:13px">8</div>
<div class="t" style="left:2px;top:282px;width:25px;text-align:center;font-size:13px">9</div>
<div class="t" style="left:2px;top:299px;width:25px;text-align:center;font-size:13px">10</div>
<div class="t" style="left:2px;top:316px;width:25px;text-align:center;font-size:13px">11</div>
<div class="t" style="left:2px;top:333px;width:25px;text-align:center;font-size:13px">12</div>
<div class="t" style="left:2px;top:351px;width:25px;text-align:center;font-size:13px">13</div>
<div class="t" style="left:2px;top:369px;width:25px;text-align:center;font-size:13px">14</div>
<div class="t" style="left:2px;top:390px;width:25px;text-align:center;font-size:13px">15</div>
<div class="t" style="left:2px;top:407px;width:25px;text-align:center;font-size:13px">16</div>
<div class="t" style="left:2px;top:431px;width:25px;text-align:center;font-size:13px">17</div>
<div class="t" style="left:2px;top:448px;width:25px;text-align:center;font-size:13px">18</div>
<div class="t" style="left:2px;top:472px;width:25px;text-align:center;font-size:13px">19</div>
<div class="t" style="left:2px;top:489px;width:25px;text-align:center;font-size:13px">20</div>
<div class="t" style="left:2px;top:513px;width:25px;text-align:center;font-size:13px">21</div>
<div class="t" style="left:2px;top:530px;width:25px;text-align:center;font-size:13px">22</div>
<div class="t" style="left:2px;top:547px;width:25px;text-align:center;font-size:13px">23</div>
<div class="t" style="left:2px;top:564px;width:25px;text-align:center;font-size:13px">24</div>
<div class="t" style="left:2px;top:581px;width:25px;text-align:center;font-size:13px">25</div>
<div class="t" style="left:2px;top:598px;width:25px;text-align:center;font-size:13px">26</div>
<div class="t" style="left:2px;top:615px;width:25px;text-align:center;font-size:13px">27</div>
<div class="t" style="left:2px;top:632px;width:25px;text-align:center;font-size:13px">28</div>
<div class="t" style="left:2px;top:650px;width:25px;text-align:center;font-size:13px">29</div>
<div class="t" style="left:2px;top:668px;width:25px;text-align:center;font-size:13px">30</div>
<div class="t" style="left:2px;top:685px;width:25px;text-align:center;font-size:13px">31</div>
<div class="t" style="left:2px;top:702px;width:25px;text-align:center;font-size:13px">32</div>
<div class="t" style="left:2px;top:719px;width:25px;text-align:center;font-size:13px">33</div>
<div class="a" style="left:28px;top:165px;width:238px;height:23px;background:#FF9900"></div>
<div class="a" style="left:28px;top:206px;width:238px;height:125px;background:#FFFF99"></div>
<div class="a" style="left:267px;top:206px;width:218px;height:125px;background:#CCFFCC"></div>
<div class="a" style="left:28px;top:332px;width:238px;height:16px;background:#FFCC99"></div>
<div class="a" style="left:28px;top:367px;width:238px;height:17px;background:#00FFFF"></div>
<div class="a" style="left:27px;top:164px;width:240px;height:1px;background:#000"></div>
<div class="a" style="left:27px;top:188px;width:240px;height:1px;background:#000"></div>
<div class="a" style="left:27px;top:164px;width:1px;height:25px;background:#000"></div>
<div class="a" style="left:266px;top:164px;width:1px;height:25px;background:#000"></div>
<div class="a" style="left:27px;top:205px;width:240px;height:1px;background:#000"></div>
<div class="a" style="left:27px;top:188px;width:1px;height:18px;background:#000"></div>
<div class="a" style="left:155px;top:188px;width:1px;height:18px;background:#000"></div>
<div class="a" style="left:266px;top:188px;width:1px;height:18px;background:#000"></div>
<div class="a" style="left:27px;top:229px;width:459px;height:1px;background:#000"></div>
<div class="a" style="left:27px;top:205px;width:1px;height:144px;background:#000"></div>
<div class="a" style="left:266px;top:205px;width:1px;height:144px;background:#000"></div>
<div class="a" style="left:485px;top:205px;width:1px;height:127px;background:#000"></div>
<div class="a" style="left:155px;top:229px;width:1px;height:120px;background:#000"></div>
<div class="a" style="left:27px;top:246px;width:459px;height:1px;background:#000"></div>
<div class="a" style="left:27px;top:263px;width:459px;height:1px;background:#000"></div>
<div class="a" style="left:27px;top:280px;width:459px;height:1px;background:#000"></div>
<div class="a" style="left:27px;top:297px;width:459px;height:1px;background:#000"></div>
<div class="a" style="left:27px;top:314px;width:459px;height:1px;background:#000"></div>
<div class="a" style="left:27px;top:331px;width:459px;height:1px;background:#000"></div>
<div class="a" style="left:27px;top:331px;width:459px;height:1px;background:#000"></div>
<div class="a" style="left:27px;top:348px;width:240px;height:1px;background:#000"></div>
<div class="a" style="left:266px;top:205px;width:220px;height:1px;background:#000"></div>
<div class="a" style="left:27px;top:365px;width:240px;height:2px;background:#000"></div>
<div class="a" style="left:27px;top:383px;width:240px;height:2px;background:#000"></div>
<div class="a" style="left:265px;top:365px;width:2px;height:19px;background:#000"></div>
<div class="a" style="left:155px;top:366px;width:1px;height:18px;background:#000"></div>
<div class="t" style="left:31px;top:170px;font-size:16.5px;-webkit-text-stroke:0.35px #000">КПП Ф16 (5-ст.) НЕКСИЯ 8 кл.</div>
<div class="t" style="left:37.0px;top:208px;width:220px;text-align:center;font-size:19px;-webkit-text-stroke:0.3px #000">Передаточные числа</div>
<div class="t" style="left:261.0px;top:212px;width:230px;text-align:center;font-size:16px;letter-spacing:0.5px;-webkit-text-stroke:0.45px #000">Обороты на колесах (-мин)</div>
<div class="t" style="left:30px;top:249px;font-size:13px;font-weight:bold;letter-spacing:0.2px">1-передача</div>
<div class="t" style="left:161.0px;top:249px;width:100px;text-align:center;font-size:13px">3,545</div>
<div class="t" style="left:326.0px;top:249px;width:100px;text-align:center;font-size:13px;font-weight:bold">215</div>
<div class="t" style="left:30px;top:266px;font-size:13px;font-weight:bold;letter-spacing:0.2px">2-передача</div>
<div class="t" style="left:161.0px;top:266px;width:100px;text-align:center;font-size:13px">1,952</div>
<div class="t" style="left:326.0px;top:266px;width:100px;text-align:center;font-size:13px;font-weight:bold">390</div>
<div class="t" style="left:30px;top:283px;font-size:13px;font-weight:bold;letter-spacing:0.2px">3-передача</div>
<div class="t" style="left:161.0px;top:283px;width:100px;text-align:center;font-size:13px">1,276</div>
<div class="t" style="left:326.0px;top:283px;width:100px;text-align:center;font-size:13px;font-weight:bold">596</div>
<div class="t" style="left:30px;top:300px;font-size:13px;font-weight:bold;letter-spacing:0.2px">4-передача</div>
<div class="t" style="left:161.0px;top:300px;width:100px;text-align:center;font-size:13px">0,892</div>
<div class="t" style="left:326.0px;top:300px;width:100px;text-align:center;font-size:13px;font-weight:bold">853</div>
<div class="t" style="left:30px;top:317px;font-size:13px;font-weight:bold;letter-spacing:0.2px">5-передача</div>
<div class="t" style="left:161.0px;top:317px;width:100px;text-align:center;font-size:13px">0,707</div>
<div class="t" style="left:326.0px;top:317px;width:100px;text-align:center;font-size:13px;font-weight:bold">1076</div>
<div class="t" style="left:30px;top:334px;font-size:13px;font-weight:bold;letter-spacing:0.3px">Гл. передача</div>
<div class="t" style="left:161.0px;top:334px;width:100px;text-align:center;font-size:13px">3,944</div>
<div class="t" style="left:30px;top:369px;font-size:13px;font-weight:bold;color:#002020">Обороты дв.(-мин.)</div>
<div class="t" style="left:161.0px;top:369px;width:100px;text-align:center;font-size:13px;color:#000020">3000</div>
<div class="a" style="left:28px;top:464px;width:238px;height:23px;background:#FF9900"></div>
<div class="a" style="left:28px;top:505px;width:238px;height:125px;background:#FFFF99"></div>
<div class="a" style="left:267px;top:505px;width:218px;height:125px;background:#CCFFCC"></div>
<div class="a" style="left:28px;top:631px;width:238px;height:16px;background:#FFCC99"></div>
<div class="a" style="left:28px;top:666px;width:238px;height:17px;background:#00FFFF"></div>
<div class="a" style="left:27px;top:463px;width:240px;height:1px;background:#000"></div>
<div class="a" style="left:27px;top:487px;width:240px;height:1px;background:#000"></div>
<div class="a" style="left:27px;top:463px;width:1px;height:25px;background:#000"></div>
<div class="a" style="left:266px;top:463px;width:1px;height:25px;background:#000"></div>
<div class="a" style="left:27px;top:504px;width:240px;height:1px;background:#000"></div>
<div class="a" style="left:27px;top:487px;width:1px;height:18px;background:#000"></div>
<div class="a" style="left:155px;top:487px;width:1px;height:18px;background:#000"></div>
<div class="a" style="left:266px;top:487px;width:1px;height:18px;background:#000"></div>
<div class="a" style="left:27px;top:528px;width:459px;height:1px;background:#000"></div>
<div class="a" style="left:27px;top:504px;width:1px;height:144px;background:#000"></div>
<div class="a" style="left:266px;top:504px;width:1px;height:144px;background:#000"></div>
<div class="a" style="left:485px;top:504px;width:1px;height:127px;background:#000"></div>
<div class="a" style="left:155px;top:528px;width:1px;height:120px;background:#000"></div>
<div class="a" style="left:27px;top:545px;width:459px;height:1px;background:#000"></div>
<div class="a" style="left:27px;top:562px;width:459px;height:1px;background:#000"></div>
<div class="a" style="left:27px;top:579px;width:459px;height:1px;background:#000"></div>
<div class="a" style="left:27px;top:596px;width:459px;height:1px;background:#000"></div>
<div class="a" style="left:27px;top:613px;width:459px;height:1px;background:#000"></div>
<div class="a" style="left:27px;top:630px;width:459px;height:1px;background:#000"></div>
<div class="a" style="left:27px;top:630px;width:459px;height:1px;background:#000"></div>
<div class="a" style="left:27px;top:647px;width:240px;height:1px;background:#000"></div>
<div class="a" style="left:266px;top:504px;width:220px;height:1px;background:#000"></div>
<div class="a" style="left:27px;top:664px;width:240px;height:2px;background:#000"></div>
<div class="a" style="left:27px;top:682px;width:240px;height:2px;background:#000"></div>
<div class="a" style="left:265px;top:664px;width:2px;height:19px;background:#000"></div>
<div class="a" style="left:155px;top:665px;width:1px;height:18px;background:#000"></div>
<div class="t" style="left:31px;top:469px;font-size:16.5px;-webkit-text-stroke:0.35px #000">КПП Ф16 (5-ст.) НЕКСИЯ 16кл.</div>
<div class="t" style="left:37.0px;top:507px;width:220px;text-align:center;font-size:19px;-webkit-text-stroke:0.3px #000">Передаточные числа</div>
<div class="t" style="left:261.0px;top:511px;width:230px;text-align:center;font-size:16px;letter-spacing:0.5px;-webkit-text-stroke:0.45px #000">Обороты на колесах (-мин)</div>
<div class="t" style="left:30px;top:548px;font-size:13px;font-weight:bold;letter-spacing:0.2px">1-передача</div>
<div class="t" style="left:161.0px;top:548px;width:100px;text-align:center;font-size:13px">3,545</div>
<div class="t" style="left:326.0px;top:548px;width:100px;text-align:center;font-size:13px;font-weight:bold">202</div>
<div class="t" style="left:30px;top:565px;font-size:13px;font-weight:bold;letter-spacing:0.2px">2-передача</div>
<div class="t" style="left:161.0px;top:565px;width:100px;text-align:center;font-size:13px">1,952</div>
<div class="t" style="left:326.0px;top:565px;width:100px;text-align:center;font-size:13px;font-weight:bold">368</div>
<div class="t" style="left:30px;top:582px;font-size:13px;font-weight:bold;letter-spacing:0.2px">3-передача</div>
<div class="t" style="left:161.0px;top:582px;width:100px;text-align:center;font-size:13px">1,276</div>
<div class="t" style="left:326.0px;top:582px;width:100px;text-align:center;font-size:13px;font-weight:bold">562</div>
<div class="t" style="left:30px;top:599px;font-size:13px;font-weight:bold;letter-spacing:0.2px">4-передача</div>
<div class="t" style="left:161.0px;top:599px;width:100px;text-align:center;font-size:13px">0,892</div>
<div class="t" style="left:326.0px;top:599px;width:100px;text-align:center;font-size:13px;font-weight:bold">805</div>
<div class="t" style="left:30px;top:616px;font-size:13px;font-weight:bold;letter-spacing:0.2px">5-передача</div>
<div class="t" style="left:161.0px;top:616px;width:100px;text-align:center;font-size:13px">0,707</div>
<div class="t" style="left:326.0px;top:616px;width:100px;text-align:center;font-size:13px;font-weight:bold">1015</div>
<div class="t" style="left:30px;top:633px;font-size:13px;font-weight:bold;letter-spacing:0.3px">Гл. передача</div>
<div class="t" style="left:161.0px;top:633px;width:100px;text-align:center;font-size:13px">4,18</div>
<div class="t" style="left:30px;top:668px;font-size:13px;font-weight:bold;color:#002020">Обороты дв.(-мин.)</div>
<div class="t" style="left:161.0px;top:668px;width:100px;text-align:center;font-size:13px;color:#000020">3000</div>
<div class="a" style="left:550px;top:666px;width:703px;height:17px;background:#fff"></div>
<div class="a" style="left:265px;top:716px;width:222px;height:18px;border:2px solid #000;border-bottom:none"></div>
<div class="a" style="left:483px;top:731px;width:5px;height:3px;background:#000"></div>
<div class="t" style="left:552px;top:668px;font-size:13px">Данная диаграмма показывает обороты колес, на двух разных КПП , при одинаковых оборотах двигателя.</div>
<svg style="left:496px;top:188px" width="620" height="381" font-family="Liberation Sans"><rect x="0.5" y="0.5" width="619" height="380" fill="#fff" stroke="#000"/><rect x="79" y="70" width="526" height="261" fill="#C0C0C0"/><path d="M79 70.5 H605.5 V331" fill="none" stroke="#808080"/><path d="M75 331.5 H79" stroke="#000"/><text x="68" y="336.0" font-size="12" text-anchor="end">0</text><path d="M79 288.5 H605" stroke="#000"/><path d="M75 288.5 H79" stroke="#000"/><text x="68" y="293.0" font-size="12" text-anchor="end">200</text><path d="M79 244.5 H605" stroke="#000"/><path d="M75 244.5 H79" stroke="#000"/><text x="68" y="249.0" font-size="12" text-anchor="end">400</text><path d="M79 200.5 H605" stroke="#000"/><path d="M75 200.5 H79" stroke="#000"/><text x="68" y="205.0" font-size="12" text-anchor="end">600</text><path d="M79 157.5 H605" stroke="#000"/><path d="M75 157.5 H79" stroke="#000"/><text x="68" y="162.0" font-size="12" text-anchor="end">800</text><path d="M79 114.5 H605" stroke="#000"/><path d="M75 114.5 H79" stroke="#000"/><text x="68" y="119.0" font-size="12" text-anchor="end">1000</text><path d="M75 70.5 H79" stroke="#000"/><text x="68" y="75.0" font-size="12" text-anchor="end">1200</text><path d="M79.5 70 V331.5 H605.5" fill="none" stroke="#000"/><rect x="96.5" y="284.5" width="22" height="47" fill="#9999FF" stroke="#000"/><text x="107.5" y="275" font-size="12" text-anchor="middle">215</text><rect x="119.5" y="246.5" width="23" height="85" fill="#993366" stroke="#000"/><text x="131.0" y="237" font-size="12" text-anchor="middle">390</text><rect x="143.5" y="201.5" width="22" height="130" fill="#FFFFCC" stroke="#000"/><text x="154.5" y="192" font-size="12" text-anchor="middle">596</text><rect x="166.5" y="145.5" width="23" height="186" fill="#CCFFFF" stroke="#000"/><text x="178.0" y="136" font-size="12" text-anchor="middle">853</text><rect x="190.5" y="97.5" width="22" height="234" fill="#660066" stroke="#000"/><text x="201.5" y="88" font-size="12" text-anchor="middle">1076</text><rect x="470.5" y="287.5" width="22" height="44" fill="#00CCFF" stroke="#000"/><text x="481.5" y="278" font-size="12" text-anchor="middle">202</text><rect x="493.5" y="251.5" width="23" height="80" fill="#CCFFFF" stroke="#000"/><text x="505.0" y="242" font-size="12" text-anchor="middle">368</text><rect x="517.5" y="209.5" width="22" height="122" fill="#CCFFCC" stroke="#000"/><text x="528.5" y="200" font-size="12" text-anchor="middle">562</text><rect x="540.5" y="156.5" width="23" height="175" fill="#FFFF99" stroke="#000"/><text x="552.0" y="147" font-size="12" text-anchor="middle">805</text><rect x="564.5" y="110.5" width="22" height="221" fill="#99CCFF" stroke="#000"/><text x="575.5" y="101" font-size="12" text-anchor="middle">1015</text><text x="435" y="322" font-size="12" text-anchor="middle">0</text><text x="310" y="32" font-size="16" font-weight="bold" text-anchor="middle">КПП</text><text x="162" y="358" font-size="12" font-weight="bold" text-anchor="middle">(НЕКСИЯ)</text><text x="329" y="358" font-size="13" font-weight="bold" text-anchor="middle">Обороты двигателя (-мин)</text><text x="525" y="358" font-size="12" font-weight="bold" text-anchor="middle">(ОПЕЛЬ)</text><text transform="translate(31,201) rotate(-90)" font-size="13" font-weight="bold" text-anchor="middle">Обороты на колесах (-мин)</text></svg>
<div class="a" style="left:1263px;top:113px;width:15px;height:621px;background:repeating-conic-gradient(#D4D0C8 0 25%,#FFFFFF 0 50%) 0 0/2px 2px"></div>
<div class="a" style="left:1263px;top:113px;width:15px;height:7px;background:#D4D0C8;border-bottom:1px solid #404040"></div>
<div class="a" style="left:1263px;top:120px;width:15px;height:15px;background:#D4D0C8;border-top:1px solid #D4D0C8;border-left:1px solid #D4D0C8;border-right:1px solid #404040;border-bottom:1px solid #404040;box-shadow:inset 1px 1px 0 #fff,inset -1px -1px 0 #808080"></div>
<svg style="left:1267px;top:125px" width="7" height="4"><path d="M0 4 H7 L3.5 0Z" fill="#000"/></svg>
<div class="a" style="left:1263px;top:135px;width:15px;height:566px;background:#D4D0C8;border-top:1px solid #D4D0C8;border-left:1px solid #D4D0C8;border-right:1px solid #404040;border-bottom:1px solid #404040;box-shadow:inset 1px 1px 0 #fff,inset -1px -1px 0 #808080"></div>
<div class="a" style="left:1263px;top:719px;width:15px;height:15px;background:#D4D0C8;border-top:1px solid #D4D0C8;border-left:1px solid #D4D0C8;border-right:1px solid #404040;border-bottom:1px solid #404040;box-shadow:inset 1px 1px 0 #fff,inset -1px -1px 0 #808080"></div>
<svg style="left:1267px;top:725px" width="7" height="4"><path d="M0 0 H7 L3.5 4Z" fill="#000"/></svg>
<div class="a" style="left:1278px;top:112px;width:2px;height:623px;background:#D4D0C8"></div>
<div class="a" style="left:1263px;top:734px;width:15px;height:15px;background:#D4D0C8"></div>
<div class="a" style="left:1262px;top:734px;width:1px;height:15px;background:#404040"></div>
<div class="a" style="left:2px;top:734px;width:1261px;height:15px;background:#D4D0C8"></div>
<div class="a" style="left:2px;top:734px;width:1261px;height:1px;background:#808080"></div>
<svg style="left:4px;top:736px" width="56" height="12"><rect x="0.5" y="2" width="1.5" height="8" fill="#000"/><path d="M7.5 2 V10 L2.5 6Z" fill="#000"/><path d="M22 2 V10 L17 6Z" fill="#000"/><path d="M33 2 V10 L37.5 6Z" fill="#000"/><path d="M48 2 V10 L53 6Z" fill="#000"/><rect x="53" y="2" width="1.5" height="8" fill="#000"/></svg>
<div class="a" style="left:61px;top:735px;width:1px;height:14px;background:#808080"></div>
<svg style="left:0px;top:734px" width="800" height="16"><path d="M560 0.5 L566 14.5 H646 L652 0.5" fill="#D4D0C8" stroke="#000"/><path d="M474 0.5 L480 14.5 H560 L566 0.5" fill="#D4D0C8" stroke="#000"/><path d="M307 0.5 L313 14.5 H377 L383 0.5" fill="#D4D0C8" stroke="#000"/><path d="M230 0.5 L236 14.5 H307 L313 0.5" fill="#D4D0C8" stroke="#000"/><path d="M178 0.5 L184 14.5 H230 L236 0.5" fill="#D4D0C8" stroke="#000"/><path d="M126 0.5 L132 14.5 H178 L184 0.5" fill="#D4D0C8" stroke="#000"/><path d="M62 0.5 L68 14.5 H126 L132 0.5" fill="#D4D0C8" stroke="#000"/><path d="M377 0.5 L383 14.5 H474 L480 0.5" fill="#fff" stroke="#000"/><path d="M378 0.5 H479" stroke="#fff"/></svg>
<div class="t" style="left:47.0px;top:737px;width:100px;text-align:center;font-size:10.3px;color:#000">C20NE (5)</div>
<div class="t" style="left:105.0px;top:737px;width:100px;text-align:center;font-size:10.3px;color:#000">18E (5)</div>
<div class="t" style="left:157.0px;top:737px;width:100px;text-align:center;font-size:10.3px;color:#000">16S (4)</div>
<div class="t" style="left:221.5px;top:737px;width:100px;text-align:center;font-size:10.3px;color:#000">16S (5)кор.</div>
<div class="t" style="left:295.0px;top:737px;width:100px;text-align:center;font-size:10.3px;color:#000">16S(5) дл.</div>
<div class="t" style="left:378.5px;top:736px;width:100px;text-align:center;font-size:11px;font-weight:bold;letter-spacing:0.6px">1.5 (16кл) ксю</div>
<div class="t" style="left:470.0px;top:737px;width:100px;text-align:center;font-size:10.3px;color:#000">C16NZ (5)F13</div>
<div class="t" style="left:556.0px;top:737px;width:100px;text-align:center;font-size:10.3px;color:#000">C16NZ (4)F13</div>
<div class="a" style="left:762px;top:734px;width:2px;height:15px;background:#D4D0C8;border-left:1px solid #404040"></div>
<div class="a" style="left:765px;top:734px;width:498px;height:15px;background:repeating-conic-gradient(#D4D0C8 0 25%,#FFFFFF 0 50%) 0 0/2px 2px"></div>
<div class="a" style="left:765px;top:734px;width:15px;height:15px;background:#D4D0C8;border-top:1px solid #D4D0C8;border-left:1px solid #D4D0C8;border-right:1px solid #404040;border-bottom:1px solid #404040;box-shadow:inset 1px 1px 0 #fff,inset -1px -1px 0 #808080"></div>
<svg style="left:770px;top:738px" width="4" height="7"><path d="M4 0 V7 L0 3.5Z" fill="#000"/></svg>
<div class="a" style="left:780px;top:734px;width:432px;height:15px;background:#D4D0C8;border-top:1px solid #D4D0C8;border-left:1px solid #D4D0C8;border-right:1px solid #404040;border-bottom:1px solid #404040;box-shadow:inset 1px 1px 0 #fff,inset -1px -1px 0 #808080"></div>
<div class="a" style="left:1243px;top:734px;width:15px;height:15px;background:#D4D0C8;border-top:1px solid #D4D0C8;border-left:1px solid #D4D0C8;border-right:1px solid #404040;border-bottom:1px solid #404040;box-shadow:inset 1px 1px 0 #fff,inset -1px -1px 0 #808080"></div>
<svg style="left:1249px;top:738px" width="4" height="7"><path d="M0 0 V7 L4 3.5Z" fill="#000"/></svg>
<div class="a" style="left:1258px;top:734px;width:5px;height:15px;background:#fff;border-right:1px solid #404040"></div>
<div class="a" style="left:0px;top:749px;width:1280px;height:1px;background:#D4D0C8"></div>
<div class="a" style="left:0px;top:750px;width:1280px;height:1px;background:#fff"></div>
<div class="t" style="left:5px;top:757px;font-size:11px">Готово</div>
<div class="a" style="left:950px;top:753px;width:37px;height:17px;border:1px solid;border-color:#C4C0B8 #ECEAE6 #ECEAE6 #C4C0B8"></div>
<div class="a" style="left:988px;top:753px;width:112px;height:17px;border:1px solid;border-color:#C4C0B8 #ECEAE6 #ECEAE6 #C4C0B8"></div>
<div class="a" style="left:1101px;top:753px;width:27px;height:17px;border:1px solid;border-color:#C4C0B8 #ECEAE6 #ECEAE6 #C4C0B8"></div>
<div class="a" style="left:1129px;top:753px;width:29px;height:17px;border:1px solid;border-color:#C4C0B8 #ECEAE6 #ECEAE6 #C4C0B8"></div>
<div class="a" style="left:1159px;top:753px;width:27px;height:17px;border:1px solid;border-color:#C4C0B8 #ECEAE6 #ECEAE6 #C4C0B8"></div>
<div class="a" style="left:1187px;top:753px;width:29px;height:17px;border:1px solid;border-color:#C4C0B8 #ECEAE6 #ECEAE6 #C4C0B8"></div>
<div class="a" style="left:1217px;top:753px;width:23px;height:17px;border:1px solid;border-color:#C4C0B8 #ECEAE6 #ECEAE6 #C4C0B8"></div>
<div class="a" style="left:1241px;top:753px;width:35px;height:17px;border:1px solid;border-color:#C4C0B8 #ECEAE6 #ECEAE6 #C4C0B8"></div>
<div class="a" style="left:0px;top:770px;width:1280px;height:1px;background:#D4D0C8"></div>
<div class="a" style="left:0px;top:771px;width:1280px;height:1px;background:#FFFFFF"></div>
<div class="a" style="left:0px;top:772px;width:1280px;height:28px;background:#D4D0C8"></div>
<div class="a" style="left:2px;top:774px;width:51px;height:22px;background:#D4D0C8;border-top:1px solid #fff;border-left:1px solid #fff;border-right:1px solid #404040;border-bottom:1px solid #404040;box-shadow:inset -1px -1px 0 #808080"></div>
<svg style="left:4px;top:776px" width="17" height="16"><g transform="rotate(-8 8 8)"><path d="M2 2 Q5 0.5 8 2 V7.5 Q5 6 2 7.5Z" fill="#F05A24"/><path d="M9 2 Q12 3.5 15 2 V7.5 Q12 9 9 7.5Z" fill="#6BBE2E"/><path d="M2 8.5 Q5 7 8 8.5 V14 Q5 12.5 2 14Z" fill="#2F8CEB"/><path d="M9 8.5 Q12 10 15 8.5 V14 Q12 15.5 9 14Z" fill="#FFC610"/></g></svg>
<div class="t" style="left:22px;top:779px;font-size:11.5px;font-weight:bold;letter-spacing:0.2px">Пуск</div>
<div class="a" style="left:60px;top:776px;width:1px;height:20px;background:#808080"></div>
<div class="a" style="left:61px;top:776px;width:1px;height:20px;background:#fff"></div>
<svg style="left:69px;top:776px" width="100" height="18"><circle cx="9" cy="9" r="7.5" fill="#B01808" stroke="#F0C8C8" stroke-width="1.2"/><path d="M4 12 Q6 6 8 9 Q9 4 11 8 Q13 6 14 12 Q9 15 4 12Z" fill="#F8B020"/><circle cx="32" cy="9" r="7.5" fill="#3848A8" stroke="#70B060" stroke-width="1.5"/><circle cx="32" cy="9" r="5" fill="#F0F0F8"/><path d="M30 6 L36 9 L30 12Z" fill="#2030A0"/><circle cx="56" cy="9.5" r="5.5" fill="none" stroke="#1E78D8" stroke-width="3"/><path d="M50.5 9.5 H61.5" stroke="#1E78D8" stroke-width="2"/><path d="M61 9.5 H56" stroke="#fff" stroke-width="1.5"/><path d="M48 15 Q52 2 64 3" fill="none" stroke="#E8B828" stroke-width="1.6"/><rect x="71" y="2" width="14" height="14" rx="2" fill="#3C82D0" stroke="#204880"/><path d="M74 5 H80 L82 7 V13 H74Z" fill="#fff"/><path d="M76 10 L81 6" stroke="#3C82D0" stroke-width="1.2"/></svg>
<div class="a" style="left:168px;top:776px;width:1px;height:20px;background:#808080"></div>
<div class="a" style="left:169px;top:776px;width:1px;height:20px;background:#fff"></div>
<div class="a" style="left:176px;top:774px;width:160px;height:22px;background:#D4D0C8;border-top:1px solid #fff;border-left:1px solid #fff;border-right:1px solid #404040;border-bottom:1px solid #404040;box-shadow:inset -1px -1px 0 #808080"></div>
<svg style="left:181px;top:776px" width="17" height="17"><circle cx="9" cy="9.5" r="5.5" fill="none" stroke="#1E78D8" stroke-width="3"/><path d="M3.5 9.5 H14.5" stroke="#1E78D8" stroke-width="2"/><path d="M14 9.5 H9" stroke="#fff" stroke-width="1.4"/><path d="M1 15 Q5 2 16 3" fill="none" stroke="#E8B828" stroke-width="1.6"/></svg>
<div class="t" style="left:200px;top:780px;font-size:11px">opel-ascona@mail.ru: Хр...</div>
<div class="a" style="left:339px;top:774px;width:160px;height:22px;background:#D4D0C8;border-top:1px solid #fff;border-left:1px solid #fff;border-right:1px solid #404040;border-bottom:1px solid #404040;box-shadow:inset -1px -1px 0 #808080"></div>
<svg style="left:344px;top:776px" width="17" height="17"><circle cx="9" cy="9.5" r="5.5" fill="none" stroke="#1E78D8" stroke-width="3"/><path d="M3.5 9.5 H14.5" stroke="#1E78D8" stroke-width="2"/><path d="M14 9.5 H9" stroke="#fff" stroke-width="1.4"/><path d="M1 15 Q5 2 16 3" fill="none" stroke="#E8B828" stroke-width="1.6"/></svg>
<div class="t" style="left:363px;top:780px;font-size:11px">Влияние КПП на расход...</div>
<div class="a" style="left:502px;top:774px;width:160px;height:22px;background:#D4D0C8;border-top:1px solid #fff;border-left:1px solid #fff;border-right:1px solid #404040;border-bottom:1px solid #404040;box-shadow:inset -1px -1px 0 #808080"></div>
<svg style="left:507px;top:778px" width="17" height="14"><path d="M1.5 2.5 H6.5 L8 4.5 H15.5 V12.5 H1.5Z" fill="#F0D060" stroke="#A08020"/><path d="M1.5 6.5 H15.5" stroke="#FFF0A0"/></svg>
<div class="t" style="left:526px;top:780px;font-size:11px">avto</div>
<div class="a" style="left:665px;top:774px;width:160px;height:22px;background:repeating-conic-gradient(#D4D0C8 0 25%,#FFFFFF 0 50%) 0 0/2px 2px;border-top:1px solid #000;border-left:1px solid #000;border-right:1px solid #fff;border-bottom:1px solid #fff;box-shadow:inset 1px 1px 0 #808080"></div>
<svg style="left:670px;top:777px" width="16" height="16"><rect x="0" y="0" width="16" height="15" fill="#0B6A12"/><rect x="2" y="2" width="12" height="12" fill="#E8FFE8"/><path d="M3 3 H6 L8 5 L10 3 H13 L11 7 L13 10 V12 H8 L7 11 L5 12 H3 L5 8Z" fill="#0B6A12"/><path d="M4.5 4.5 L10.5 10.5" stroke="#E8FFE8" stroke-width="1"/></svg>
<div class="t" style="left:689px;top:780px;font-size:11px;font-weight:bold;letter-spacing:0.25px">Microsoft Excel - PAc...</div>
<div class="a" style="left:828px;top:774px;width:160px;height:22px;background:#D4D0C8;border-top:1px solid #fff;border-left:1px solid #fff;border-right:1px solid #404040;border-bottom:1px solid #404040;box-shadow:inset -1px -1px 0 #808080"></div>
<svg style="left:833px;top:776px" width="17" height="17"><circle cx="9" cy="9.5" r="5.5" fill="none" stroke="#1E78D8" stroke-width="3"/><path d="M3.5 9.5 H14.5" stroke="#1E78D8" stroke-width="2"/><path d="M14 9.5 H9" stroke="#fff" stroke-width="1.4"/><path d="M1 15 Q5 2 16 3" fill="none" stroke="#E8B828" stroke-width="1.6"/></svg>
<div class="t" style="left:852px;top:780px;font-size:11px">Смайлы - Windows Inter...</div>
<div class="a" style="left:1106px;top:776px;width:1px;height:20px;background:#808080"></div>
<div class="a" style="left:1107px;top:776px;width:1px;height:20px;background:#fff"></div>
<div class="a" style="left:1117px;top:778px;width:17px;height:16px;background:#0A246A"></div>
<div class="t" style="left:1118px;top:781px;font-size:11px;color:#fff">EN</div>
<div class="a" style="left:1137px;top:776px;width:1px;height:20px;background:#808080"></div>
<div class="a" style="left:1138px;top:776px;width:1px;height:20px;background:#fff"></div>
<div class="a" style="left:1144px;top:774px;width:133px;height:23px;border:1px solid;border-color:#808080 #fff #fff #808080"></div>
<svg style="left:1146px;top:777px" width="95" height="18"><rect x="2" y="5" width="8" height="8" fill="#6060B0"/><rect x="6" y="2" width="8" height="8" fill="#8080D0"/><rect x="4" y="9" width="8" height="6" fill="#A0A0E0"/><path d="M21 6 H24 L29 2 V15 L24 11 H21Z" fill="#E05020" stroke="#602010"/><path d="M31 5 Q33 8.5 31 12" fill="none" stroke="#000"/><circle cx="45" cy="8" r="6" fill="#909090" stroke="#505050"/><circle cx="45" cy="8" r="3" fill="#C0C0C0"/><circle cx="62" cy="9" r="7.5" fill="#2A5AA0"/><text x="60" y="14" font-size="11" font-weight="bold" fill="#fff">i</text><circle cx="81" cy="9" r="7.5" fill="#2A5AA0"/><text x="77.5" y="13" font-size="10" fill="#fff">a</text></svg>
<div class="t" style="left:1242px;top:781px;font-size:11px">12:22</div>
</body></html>
